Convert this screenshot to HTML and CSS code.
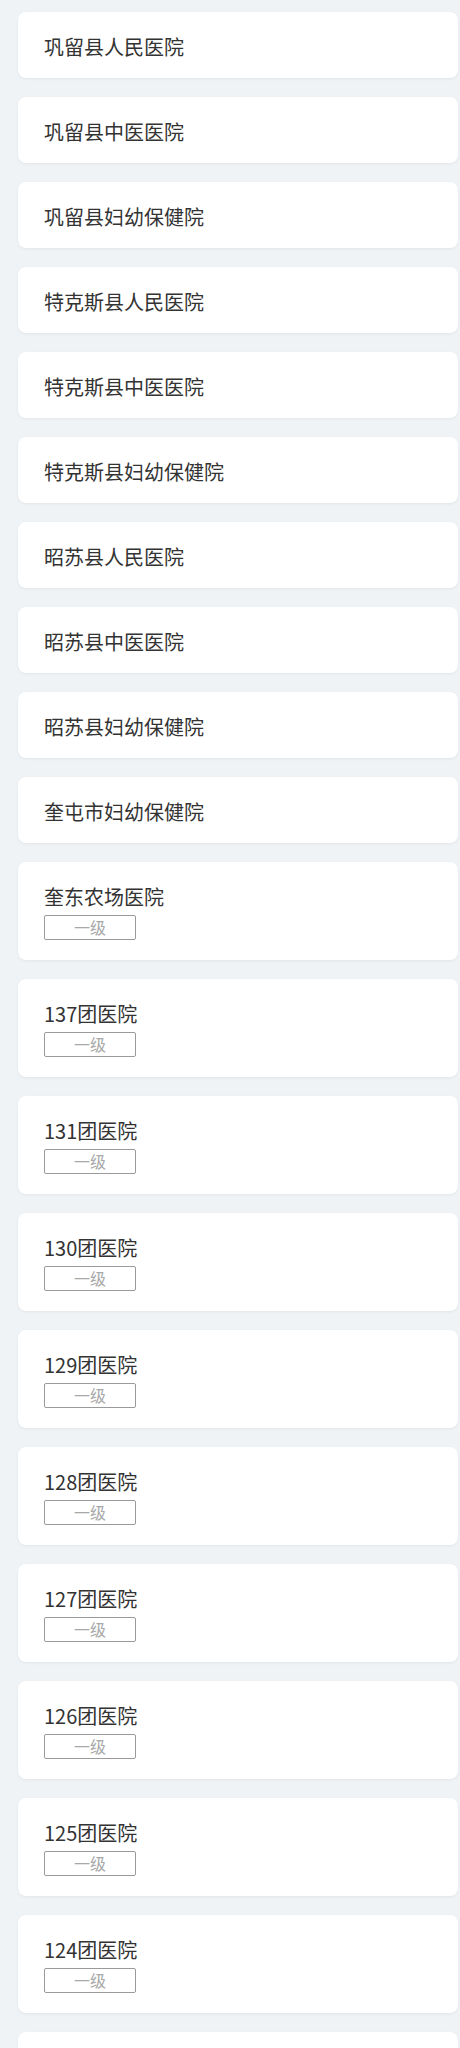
FILE: index.html
```html
<!DOCTYPE html>
<html lang="zh-CN">
<head>
<meta charset="utf-8">
<title>医院列表</title>
<link rel="stylesheet" href="styles.css">
</head>
<body>
<div class="list">
  <div class="card"><div class="name">巩留县人民医院</div></div>
  <div class="card"><div class="name">巩留县中医医院</div></div>
  <div class="card"><div class="name">巩留县妇幼保健院</div></div>
  <div class="card"><div class="name">特克斯县人民医院</div></div>
  <div class="card"><div class="name">特克斯县中医医院</div></div>
  <div class="card"><div class="name">特克斯县妇幼保健院</div></div>
  <div class="card"><div class="name">昭苏县人民医院</div></div>
  <div class="card"><div class="name">昭苏县中医医院</div></div>
  <div class="card"><div class="name">昭苏县妇幼保健院</div></div>
  <div class="card"><div class="name">奎屯市妇幼保健院</div></div>
  <div class="card"><div class="name">奎东农场医院</div><div class="level">一级</div></div>
  <div class="card"><div class="name">137团医院</div><div class="level">一级</div></div>
  <div class="card"><div class="name">131团医院</div><div class="level">一级</div></div>
  <div class="card"><div class="name">130团医院</div><div class="level">一级</div></div>
  <div class="card"><div class="name">129团医院</div><div class="level">一级</div></div>
  <div class="card"><div class="name">128团医院</div><div class="level">一级</div></div>
  <div class="card"><div class="name">127团医院</div><div class="level">一级</div></div>
  <div class="card"><div class="name">126团医院</div><div class="level">一级</div></div>
  <div class="card"><div class="name">125团医院</div><div class="level">一级</div></div>
  <div class="card"><div class="name">124团医院</div><div class="level">一级</div></div>
  <div class="card card-empty"></div>
</div>
</body>
</html>
```
FILE: styles.css
```css
html, body {
  margin: 0;
  padding: 0;
  background: #eff3f6;
}
body {
  font-family: "Noto Sans CJK SC", "Noto Sans", sans-serif;
  color: #333;
}
.list {
  display: flex;
  flex-direction: column;
  gap: 19px;
  padding: 12px 2px 40px 18px;
}
.card {
  background: #fff;
  border-radius: 8px;
  box-shadow: 0 1px 3px rgba(0, 0, 0, 0.06);
  padding: 20px 26px 16px;
}
.card-empty {
  height: 62px;
}
.name {
  font-size: 20px;
  line-height: 30px;
  height: 30px;
  white-space: nowrap;
}
.level {
  box-sizing: border-box;
  width: 92px;
  height: 25px;
  margin: 3px 0 4px;
  border: 1px solid #9a9a9a;
  border-radius: 2px;
  color: #a8a8a8;
  font-size: 16px;
  line-height: 23px;
  text-align: center;
}
```
